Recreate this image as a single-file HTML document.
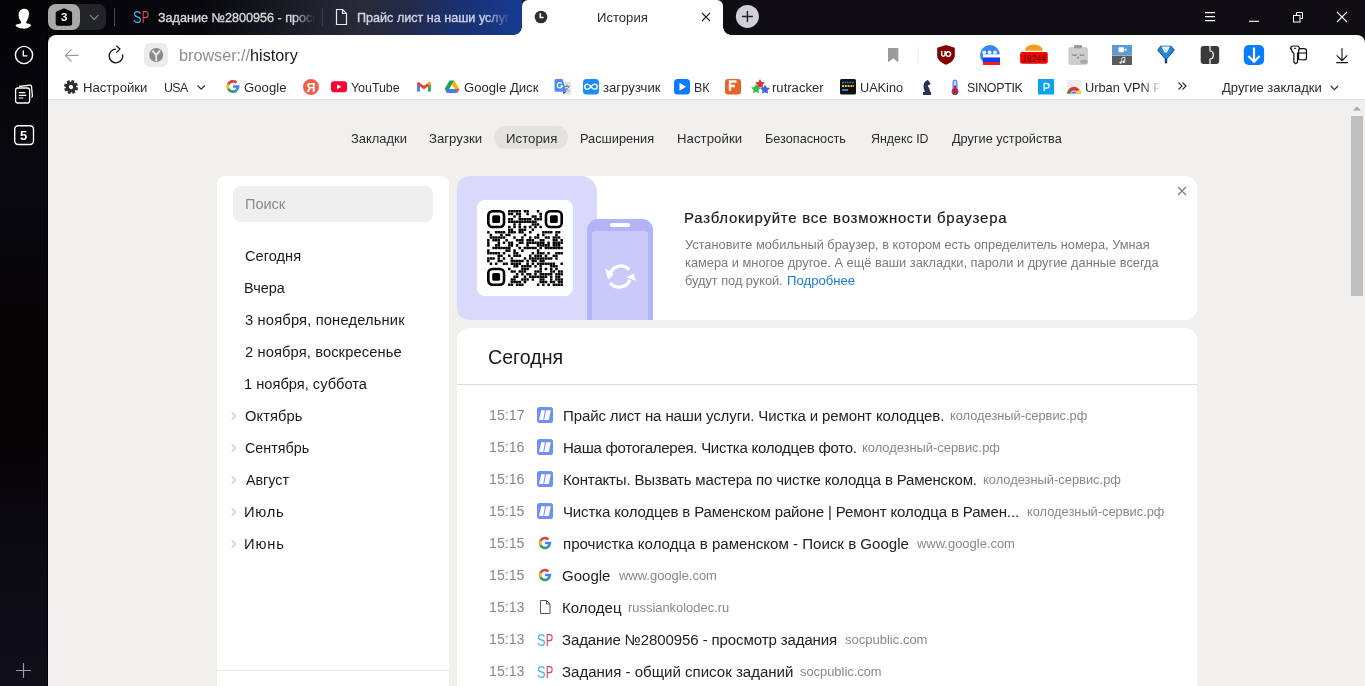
<!DOCTYPE html><html><head><meta charset="utf-8"><style>
*{margin:0;padding:0;box-sizing:border-box}
html,body{width:1365px;height:686px;overflow:hidden;background:#f1f0ef;font-family:"Liberation Sans",sans-serif}
.a{position:absolute}
.t{position:absolute;line-height:1;white-space:nowrap;will-change:transform}
svg{position:absolute;overflow:visible;will-change:transform}
</style></head><body>
<div class="a" style="left:0;top:0;width:48px;height:686px;background:linear-gradient(#050508 0%,#08080e 25%,#070405 50%,#060304 62%,#0b0911 80%,#100e1a 100%)"></div>
<div class="a" style="left:47px;top:35px;width:1px;height:651px;background:#000"></div>
<svg style="left:0;top:0" width="48" height="48">
<path d="M24.5 8.7c2.6 0 4.5 1.6 4.5 4.6 0 3.6-1.6 7.2-2.6 8.2-.6.6-.2 1.6.6 1.9 2.1.5 4.4.9 4.1 1.6-.6 1.9-4 3.7-7 3.7-3.2 0-8-1-8.5-3.6-.1-.6 2.6-1.1 4.9-1.7.8-.2 1-1.2.4-1.8-1.3-1.4-2.3-3.9-2.3-6.6 0-3.9 2.3-6.3 5.9-6.3z" fill="#fff"/>
</svg>
<svg style="left:0;top:40" width="48" height="30">
<circle cx="24" cy="15" r="8.6" fill="none" stroke="#fff" stroke-width="1.4"/>
<path d="M23.3 10.6v5.3h4.2" fill="none" stroke="#fff" stroke-width="1.4"/>
</svg>
<svg style="left:0;top:80" width="48" height="30">
<path d="M19 6.5l11-1.4c.8-.1 1.4.4 1.5 1.2l.9 9.5c.1.8-.4 1.3-1 1.5" fill="none" stroke="#fff" stroke-width="1.3"/>
<rect x="15.6" y="8" width="14" height="15" rx="2.2" fill="#050508" stroke="#fff" stroke-width="1.3"/>
<path d="M18.8 12.6h6.5M18.8 15.3h7.5M18.8 18h4.5" stroke="#fff" stroke-width="1.2"/>
</svg>
<svg style="left:0;top:120" width="48" height="30">
<rect x="14.7" y="5.7" width="18.8" height="18.8" rx="3.5" fill="none" stroke="#fff" stroke-width="1.4"/>
</svg>
<div class="t" style="left:19.5px;top:129.20px;font-size:13px;color:#fff;font-weight:700;">5</div>

<svg style="left:0;top:655" width="48" height="30">
<path d="M23.5 8v15M16 15.5h15" stroke="#9a9aa0" stroke-width="1.2"/>
</svg>
<div class="a" style="left:48px;top:0;width:1317px;height:35px;background:linear-gradient(90deg,#05050a 0px,#07070c 150px,#1c1d28 250px,#272a38 310px,#222a48 360px,#1b3170 410px,#18388a 460px,#183a8e 474px,#0f0c12 474px,#0f0c12 100%)"></div>
<div class="a" style="left:48px;top:4px;width:58px;height:26px;border-radius:8px;background:#232428"></div>
<div class="a" style="left:48px;top:4px;width:32px;height:26px;border-radius:8px;background:#a9a9a9"></div>
<svg style="left:48px;top:0" width="60" height="35">
<path d="M16 8.2 L23.3 11.6 Q24.1 12 24.1 13 L24.1 23.6 Q24.1 25.8 21.9 25.8 L9.9 25.8 Q7.7 25.8 7.7 23.6 L7.7 13 Q7.7 12 8.5 11.6 Z" fill="#000"/>
<path d="M42 15.2l4.2 4.2 4.2-4.2" fill="none" stroke="#8c8c90" stroke-width="1.2"/>
</svg>
<div class="t" style="left:60.9px;top:12.17px;font-size:11.5px;color:#fff;font-weight:700;">3</div>

<div class="a" style="left:114px;top:8px;width:1px;height:18px;background:#48484c"></div>
<svg style="left:133px;top:6.464746227709192px" width="20.3" height="21.8"><text x="0" y="16.74" font-family="Liberation Sans" font-size="16.74" fill="#48b2ee" textLength="8.48" lengthAdjust="spacingAndGlyphs">S</text><text x="8.80" y="16.74" font-family="Liberation Sans" font-size="16.74" fill="#dc4747" textLength="7.50" lengthAdjust="spacingAndGlyphs">P</text></svg>
<div class="t" style="left:157.52px;top:11.83px;font-size:12.600px;color:#d8d8da;width:158px;overflow:hidden;-webkit-text-stroke:0.35px #d8d8da;-webkit-mask-image:linear-gradient(90deg,#000 135px,transparent 157px)">Задание №2800956 - просмотр задания</div>
<div class="a" style="left:322px;top:8px;width:1px;height:18px;background:#3a3d55"></div>
<svg style="left:330px;top:0" width="30" height="35">
<path d="M6.5 9.5h6l4 4v11h-10z" fill="none" stroke="#e8e8ee" stroke-width="1.2"/>
<path d="M12.5 9.5v4h4" fill="none" stroke="#e8e8ee" stroke-width="1.2"/>
</svg>
<div class="t" style="left:357.49px;top:11.83px;font-size:12.600px;color:#d0d4e6;width:155px;overflow:hidden;-webkit-text-stroke:0.35px #d0d4e6;-webkit-mask-image:linear-gradient(90deg,#000 128px,transparent 154px)">Прайс лист на наши услуги</div>
<div class="a" style="left:522px;top:0;width:201px;height:35px;background:#fff;border-radius:6px 6px 0 0"></div>
<div class="a" style="left:514px;top:27px;width:8px;height:8px;background:radial-gradient(circle at 0 0,transparent 7.5px,#fff 8px)"></div>
<div class="a" style="left:723px;top:27px;width:8px;height:8px;background:radial-gradient(circle at 100% 0,transparent 7.5px,#fff 8px)"></div>
<svg style="left:522px;top:0" width="201" height="35">
<circle cx="19" cy="17" r="6.3" fill="#2e2e2e"/>
<path d="M18.3 13.2v4.3h3.3" fill="none" stroke="#fff" stroke-width="1.6"/>
<path d="M180 13l8 8M188 13l-8 8" stroke="#222" stroke-width="1.1"/>
</svg>
<div class="t" style="left:596.65px;top:11.40px;font-size:13.114px;color:#2a2a2a;">История</div>
<svg style="left:730px;top:0" width="40" height="35">
<circle cx="17.4" cy="16.4" r="11.5" fill="#d0d0d4"/>
<path d="M17.4 11v11M11.9 16.5h11" stroke="#1b222a" stroke-width="1.4"/>
</svg>
<svg style="left:1190px;top:0" width="175" height="35">
<path d="M15 12.6h10M15 16.6h10M15 20.6h10" stroke="#fff" stroke-width="1.1"/>
<path d="M59 21.3h10" stroke="#fff" stroke-width="1.1"/>
<rect x="103.5" y="15.5" width="6.5" height="6.5" fill="none" stroke="#fff" stroke-width="1"/>
<path d="M106.5 15V12.5H112.5V18.5H110.5" fill="none" stroke="#fff" stroke-width="1"/>
<path d="M147 12l10 10M157 12l-10 10" stroke="#fff" stroke-width="1.1"/>
</svg>
<div class="a" style="left:48px;top:35px;width:1317px;height:12px;background:#0f0c12"></div>
<div class="a" style="left:48px;top:35px;width:1317px;height:65px;background:#fff;border-radius:8px 8px 0 0"></div>
<div class="a" style="left:48px;top:99px;width:1317px;height:1px;background:#e3e3e3"></div>
<svg style="left:48px;top:35px" width="130" height="38">
<path d="M30.5 20.4H17.4M23.5 14.3l-6.1 6.1 6.1 6.1" fill="none" stroke="#9c9c9c" stroke-width="1.1"/>
<path d="M68 14.2A6.8 6.8 0 1 0 74.6 19.3" fill="none" stroke="#111" stroke-width="1.3"/>
<path d="M68.3 10.6l3.6 3.5-3.6 3.5" fill="none" stroke="#111" stroke-width="1.3"/>
<rect x="96" y="8" width="24" height="24" rx="6" fill="#ececec"/>
<circle cx="108.2" cy="20" r="7" fill="#8b8b8b"/>
<path d="M104.4 15.6l3.8 4.4 3.8-4.4M108.2 20v6" fill="none" stroke="#ececec" stroke-width="1.8"/>
</svg>
<div class="t" style="left:178.5px;top:47.3px;font-size:16.2px;color:#8e8e8e">browser://<span style="color:#1a1a1a">history</span></div>
<svg style="left:860px;top:35px" width="505" height="38">
<path d="M28.6 13.6h9.2v12.6l-4.6-3.6-4.6 3.6z" fill="#9b9b9b" stroke="#9b9b9b" stroke-width="1.2" stroke-linejoin="round"/>
<rect x="57.5" y="12" width="1" height="16" fill="#e6e6e6"/>
<path d="M86 10L94.8 12.7V20C94.8 24.5 91 28 86 29.7C81 28 77.2 24.5 77.2 20V12.7Z" fill="#820000"/>
<path d="M81.7 16.1v3.5a1.65 1.65 0 0 0 3.3 0v-3.5" fill="none" stroke="#fff" stroke-width="1.4"/>
<circle cx="88.3" cy="19.1" r="2.3" fill="none" stroke="#fff" stroke-width="1.4"/>
<circle cx="130" cy="20" r="10" fill="#3a86f0"/>
<circle cx="124.2" cy="17.3" r="1.9" fill="#eaf2ff"/>
<circle cx="129.6" cy="17.3" r="1.9" fill="#eaf2ff"/>
<circle cx="135" cy="17.3" r="1.9" fill="#eaf2ff"/>
<rect x="123" y="19.3" width="17" height="3.3" fill="#fff"/>
<rect x="123" y="22.6" width="17" height="4.4" fill="#1a3ff0"/>
<rect x="123" y="27" width="17" height="3" fill="#ee1c1c"/>
<path d="M164.8 15.8A9.1 6.4 0 0 1 183 15.8Z" fill="#f89a1c"/>
<rect x="160.1" y="17" width="27.7" height="11.8" rx="2" fill="#ff0000"/>
<text x="162.6" y="27" font-family="Liberation Mono" font-size="10" fill="#1a1a1a" textLength="23.6" lengthAdjust="spacingAndGlyphs">10244</text>
<rect x="209" y="12.7" width="18.3" height="16.6" rx="1.5" fill="#cdcdcd" stroke="#bdbdbd" stroke-width="0.8"/>
<rect x="214" y="10" width="8" height="3.2" rx="0.8" fill="#9c9c9c"/>
<path d="M212.3 19.5q2.2 2 4.4 0M219.8 19.5q2.2 2 4.4 0" fill="none" stroke="#8c8c8c" stroke-width="1.1"/>
<circle cx="218" cy="22.7" r="1.1" fill="#8c8c8c"/>
<ellipse cx="224" cy="26.8" rx="3.7" ry="2.2" fill="#a8a8a8"/>
<rect x="252" y="10" width="20" height="10" fill="#5b9bd5"/>
<rect x="252" y="20.5" width="20" height="9.5" fill="#5a5a5a"/>
<rect x="258.5" y="12.2" width="5.5" height="5" rx="1" fill="#fff"/>
<path d="M264 14.7l2.5-1.5v3z" fill="#fff"/>
<circle cx="260.6" cy="27.6" r="1.2" fill="#fff"/><circle cx="263.8" cy="26.7" r="1.2" fill="#fff"/><path d="M261.7 27.6v-4.6l3.2-.9v4.6" fill="none" stroke="#fff" stroke-width="0.8"/>
<path d="M297.7 15L300.7 11.2H311L314.3 15L306 24.8Z" fill="#1e88e0" stroke="#0b3c80" stroke-width="0.9" stroke-linejoin="round"/>
<path d="M301.5 11.6H310L307 17.5H304.3Z" fill="#e6f6ff"/>
<rect x="304.8" y="23.5" width="2.4" height="5" rx="1" fill="#0b3c80"/>
<rect x="340.7" y="11" width="18.5" height="18" rx="3" fill="#3a3a3a"/>
<path d="M350 11v5c2.2 0 3.3 1.8 3.3 4s-1.1 4-3.3 4v5" fill="none" stroke="#fff" stroke-width="1.2"/>
<rect x="383.8" y="10" width="20.3" height="20" rx="5" fill="#0a7cff"/>
<path d="M394 12.5v14M388.3 21l5.7 5.7 5.7-5.7" fill="none" stroke="#fff" stroke-width="2.2"/>
<path d="M430.5 14c0-2 1-3 2.8-3h3.4c1.8 0 2.8 1 2.8 3 0 2-.8 3.5-2 4.5v8.7l-1.8 1.5-1.8-1.5v-8.7c-1.4-1-2.4-2.5-2.4-4.5z" fill="none" stroke="#111" stroke-width="1.2"/>
<path d="M434 13.3h2.2" stroke="#111" stroke-width="1"/>
<path d="M438.6 24.5v-8.5c0-1.5.8-2.3 2.2-2.3h3.5c1.5 0 2.2.8 2.2 2.3v6.8c0 1.2-.8 2-2 2z" fill="#fff" stroke="#111" stroke-width="1.2"/>
<path d="M439 18h7.5" stroke="#111" stroke-width="1.1"/>
<path d="M482 12.9v12.8M476.7 20.4l5.3 5.3 5.3-5.3M476.3 27.6h11.5" fill="none" stroke="#111" stroke-width="1.1"/>
</svg>
<svg style="left:0;top:73px" width="1365" height="26">
<g transform="translate(71,14) rotate(18)" fill="#2e2e2e">
<circle r="3.7" fill="none" stroke="#2e2e2e" stroke-width="3.2"/>
<path d="M-1.5 -7h3v3h-3zM-1.5 4h3v3h-3zM-7 -1.5h3v3h-3zM4 -1.5h3v3h-3z"/>
<path d="M-1.5 -7h3v3h-3zM-1.5 4h3v3h-3zM-7 -1.5h3v3h-3zM4 -1.5h3v3h-3z" transform="rotate(45)"/>
</g>
<path d="M197.5 12.5l3.7 3.7 3.7-3.7" fill="none" stroke="#333" stroke-width="1.2"/>
<g transform="translate(233,13.5)">
<path d="M5.8 -1.2H0v2.5h3.3C2.9 3 1.6 4 0 4A4 4 0 0 1 0 -4c1 0 1.9.4 2.6 1l1.8-1.8A6.5 6.5 0 1 0 6.5 0c0-.4 0-.8-.1-1.2z" fill="#4285f4"/>
<path d="M-5.8 -3A6.5 6.5 0 0 1 4.4 -4.8L2.6 -3A4 4 0 0 0 -3.6 -1.6z" fill="#ea4335"/>
<path d="M-5.8 -3L-3.6 -1.6A4 4 0 0 0 -3.6 1.6L-5.8 3A6.5 6.5 0 0 1 -5.8 -3z" fill="#fbbc05"/>
<path d="M-5.8 3L-3.6 1.6A4 4 0 0 0 2.2 3.4L3.9 5.2A6.5 6.5 0 0 1 -5.8 3z" fill="#34a853"/>
</g>
<circle cx="311" cy="14" r="8" fill="#f0614c"/>
<text x="311" y="18.6" text-anchor="middle" font-family="Liberation Sans" font-size="12.5" font-weight="700" fill="#fff">Я</text>
<rect x="331" y="8.3" width="16" height="11" rx="2.8" fill="#ff0033"/>
<path d="M337 11.3v5l4.3-2.5z" fill="#fff"/>
<path d="M418.5 18.6V11" stroke="#4285f4" stroke-width="2.9"/>
<path d="M429.4 18.6V11" stroke="#34a853" stroke-width="2.9"/>
<path d="M418.5 10.6L423.9 14.6L429.4 10.6" fill="none" stroke="#ea4335" stroke-width="2.9" stroke-linecap="round" stroke-linejoin="round"/>
<circle cx="429.4" cy="10.7" r="1.45" fill="#fbbc04"/>
<path d="M449.6 7.4H454.3L449.2 16.1H444.6Z" fill="#20a050"/>
<path d="M454.3 7.4L459.3 16.1H454.6L451.9 11.5Z" fill="#fbb400"/>
<path d="M444.6 16.1H455.6L457.4 20.1H446.9Z" fill="#3d82f2"/>
<path d="M455.6 16.1H459.3L457.4 20.1Z" fill="#e8432f"/>
<rect x="563" y="9" width="8" height="12.6" fill="#e2e2e2"/>
<path d="M567 11.5v2M565 13.5h4.5M565.5 17l3.5-3M566 15.5l3 3" stroke="#6a7a7a" stroke-width="0.9"/>
<path d="M556.5 6h6l4 12.7h-10.5a1.5 1.5 0 0 1-1.5-1.5v-9.7a1.5 1.5 0 0 1 1.5-1.5z" fill="#4a8af4"/>
<path d="M563 18.7h3.5l-3.2 2.6z" fill="#3a46c8"/>
<path d="M561.8 10.6a2.6 2.6 0 1 0 .6 2.2h-2" fill="none" stroke="#fff" stroke-width="1.2"/>
<rect x="583" y="6" width="16" height="15.5" rx="3.5" fill="#1a8cff"/>
<path d="M591 13.7c-1.4-1.8-2.4-2.6-3.6-2.6a2.6 2.6 0 0 0 0 5.2c1.2 0 2.2-.8 3.6-2.6 1.4-1.8 2.4-2.6 3.6-2.6a2.6 2.6 0 0 1 0 5.2c-1.2 0-2.2-.8-3.6-2.6z" fill="none" stroke="#fff" stroke-width="1.4"/>
<rect x="674" y="6" width="16" height="15.5" rx="3.5" fill="#0a7cff"/>
<path d="M679.5 9.8v8l6.5-4z" fill="#fff"/>
<rect x="725" y="6" width="16" height="15.5" rx="3" fill="#e8622c"/>
<path d="M730 18v-9.5h6.5M730 13h5" fill="none" stroke="#f4f4f4" stroke-width="2.4"/>
<path d="M760 6l1.6 3 3.4.5-2.4 2.4.6 3.4-3.2-1.6-3 1.6.5-3.4-2.4-2.4 3.3-.5z" fill="#e0303c"/>
<path d="M756 11l1.6 3 3.4.5-2.4 2.4.6 3.4-3.2-1.6-3 1.6.5-3.4-2.4-2.4 3.3-.5z" fill="#2bc04a"/>
<path d="M765 11.5l1.6 3 3.4.5-2.4 2.4.6 3.4-3.2-1.6-3 1.6.5-3.4-2.4-2.4 3.3-.5z" fill="#4560e0"/>
<rect x="840" y="6" width="16" height="15.5" rx="1.5" fill="#111"/>
<path d="M842 9.5h12" stroke="#3a8ee0" stroke-width="1.4" stroke-dasharray="1.5 1"/>
<path d="M842 13h12" stroke="#f0c020" stroke-width="2" stroke-dasharray="2 0.8"/>
<path d="M842 17h6" stroke="#3a8ee0" stroke-width="1.8"/>
<path d="M923 21.9H931V18.9L930 18.7C930 16.5 929.2 15 928.3 13.8L927.6 12.4L930.6 11.2L929.6 9C928.9 8 928.1 7.3 927.3 6.8L926.8 7.6C924.6 8.6 923.5 10.6 923.5 13C923.5 15.5 924.4 17 924.9 18.7L923 18.9Z" fill="#2e3050"/>
<rect x="953.1" y="7" width="3.8" height="11" rx="1.9" fill="#bfe0ff" stroke="#1e64e0" stroke-width="1"/>
<circle cx="955" cy="18.6" r="3.1" fill="#e81010" stroke="#1e64e0" stroke-width="1"/>
<rect x="954" y="12.5" width="2" height="6" fill="#e81010"/>
<rect x="1038" y="6" width="16" height="15.5" fill="#0aa3f0"/>
<path d="M1044.2 18.3V10.5h2.4c1.7 0 2.6 .9 2.6 2.3s-.9 2.4-2.6 2.4h-2.4" fill="none" stroke="#fff" stroke-width="1.3"/>
<rect x="1067" y="7" width="14" height="7" fill="#ededed"/>
<path d="M1067.2 20.5A6.8 6.8 0 0 1 1080.8 20.5Z" fill="#db3b2e"/>
<path d="M1067.2 20.5A6.8 6.8 0 0 1 1068.3 16.7L1071.5 20.5Z" fill="#19a049"/>
<path d="M1080.8 20.5A6.8 6.8 0 0 0 1079.5 16.5L1076.3 18.4L1076.6 20.5Z" fill="#fcd116"/>
<path d="M1071.1 20.5A2.9 2.9 0 0 1 1076.9 20.5Z" fill="#fff"/>
<path d="M1071.7 20.5A2.3 2.3 0 0 1 1076.3 20.5Z" fill="#3d7ef0"/>
<path d="M1178.5 9.5l3.5 3.5-3.5 3.5M1182.5 9.5l3.5 3.5-3.5 3.5" fill="none" stroke="#333" stroke-width="1.2"/>
<path d="M1330.8 13l3.6 3.6 3.6-3.6" fill="none" stroke="#333" stroke-width="1.2"/>
</svg>
<div class="t" style="left:82.65px;top:81.37px;font-size:13.145px;color:#2b2b2b;">Настройки</div>
<div class="t" style="left:163.73px;top:81.99px;font-size:12.416px;color:#2b2b2b;letter-spacing:-0.649px;">USA</div>
<div class="t" style="left:244.34px;top:81.34px;font-size:13.184px;color:#2b2b2b;letter-spacing:0.025px;">Google</div>
<div class="t" style="left:351.05px;top:81.99px;font-size:12.416px;color:#2b2b2b;letter-spacing:-0.016px;">YouTube</div>
<div class="t" style="left:463.64px;top:81.39px;font-size:13.125px;color:#2b2b2b;">Google Диск</div>
<div class="t" style="left:603.24px;top:81.34px;font-size:13.184px;color:#2b2b2b;letter-spacing:0.004px;">загрузчик</div>
<div class="t" style="left:693.61px;top:81.99px;font-size:12.416px;color:#2b2b2b;letter-spacing:-0.089px;">ВК</div>
<div class="t" style="left:772.41px;top:81.42px;font-size:13.093px;color:#2b2b2b;">rutracker</div>
<div class="t" style="left:859.61px;top:81.75px;font-size:12.696px;color:#2b2b2b;">UAKino</div>
<div class="t" style="left:966.50px;top:81.99px;font-size:12.416px;color:#2b2b2b;letter-spacing:-0.295px;">SINOPTIK</div>
<div class="t" style="left:1222.10px;top:81.47px;font-size:13.024px;color:#2b2b2b;">Другие закладки</div>
<div class="t" style="left:1085.40px;top:81.66px;font-size:12.800px;color:#2b2b2b;width:76px;overflow:hidden;-webkit-mask-image:linear-gradient(90deg,#000 58px,transparent 76px)">Urban VPN Proxy</div>
<div class="a" style="left:1351px;top:116px;width:12px;height:180px;background:#bfbfbf"></div>
<svg style="left:1345px;top:100px" width="20" height="16"><path d="M8 10.6l4-4 4 4z" fill="#a8a8a8"/></svg>
<div class="a" style="left:494px;top:126px;width:74px;height:23px;border-radius:12px;background:#e3e2e1"></div>
<div class="t" style="left:350.61px;top:132.55px;font-size:12.933px;color:#2b2b2b;">Закладки</div>
<div class="t" style="left:429.10px;top:132.34px;font-size:13.184px;color:#2b2b2b;letter-spacing:0.006px;">Загрузки</div>
<div class="t" style="left:505.65px;top:132.34px;font-size:13.184px;color:#2b2b2b;letter-spacing:0.040px;">История</div>
<div class="t" style="left:579.98px;top:132.70px;font-size:12.760px;color:#2b2b2b;">Расширения</div>
<div class="t" style="left:677.15px;top:132.34px;font-size:13.184px;color:#2b2b2b;letter-spacing:0.064px;">Настройки</div>
<div class="t" style="left:765.18px;top:132.75px;font-size:12.704px;color:#2b2b2b;">Безопасность</div>
<div class="t" style="left:870.50px;top:132.99px;font-size:12.416px;color:#2b2b2b;">Яндекс ID</div>
<div class="t" style="left:952.40px;top:132.73px;font-size:12.727px;color:#2b2b2b;">Другие устройства</div>
<div class="a" style="left:217px;top:176px;width:232px;height:520px;background:#fff;border-radius:8px"></div>
<div class="a" style="left:233px;top:186px;width:200px;height:36px;background:#efefef;border-radius:8px"></div>
<div class="t" style="left:244.54px;top:197.19px;font-size:14.537px;color:#8a8a8a;">Поиск</div>
<div class="t" style="left:244.77px;top:249.10px;font-size:14.647px;color:#1a1a1a;">Сегодня</div>
<div class="t" style="left:244.35px;top:281.30px;font-size:14.415px;color:#1a1a1a;">Вчера</div>
<div class="t" style="left:245.06px;top:313.04px;font-size:14.717px;color:#1a1a1a;letter-spacing:0.157px;">3 ноября, понедельник</div>
<div class="t" style="left:244.76px;top:345.04px;font-size:14.717px;color:#1a1a1a;letter-spacing:0.104px;">2 ноября, воскресенье</div>
<div class="t" style="left:244.47px;top:377.08px;font-size:14.676px;color:#1a1a1a;">1 ноября, суббота</div>
<div class="t" style="left:244.91px;top:409.04px;font-size:14.717px;color:#1a1a1a;letter-spacing:0.091px;">Октябрь</div>
<svg style="left:228px;top:408px" width="12" height="16"><path d="M4 4.5l3.5 3.5-3.5 3.5" fill="none" stroke="#9a9a9a" stroke-width="1"/></svg>
<div class="t" style="left:244.78px;top:441.37px;font-size:14.331px;color:#1a1a1a;">Сентябрь</div>
<svg style="left:228px;top:440px" width="12" height="16"><path d="M4 4.5l3.5 3.5-3.5 3.5" fill="none" stroke="#9a9a9a" stroke-width="1"/></svg>
<div class="t" style="left:245.50px;top:473.40px;font-size:14.292px;color:#1a1a1a;">Август</div>
<svg style="left:228px;top:472px" width="12" height="16"><path d="M4 4.5l3.5 3.5-3.5 3.5" fill="none" stroke="#9a9a9a" stroke-width="1"/></svg>
<div class="t" style="left:244.32px;top:505.04px;font-size:14.717px;color:#1a1a1a;letter-spacing:0.677px;">Июль</div>
<svg style="left:228px;top:504px" width="12" height="16"><path d="M4 4.5l3.5 3.5-3.5 3.5" fill="none" stroke="#9a9a9a" stroke-width="1"/></svg>
<div class="t" style="left:244.32px;top:537.04px;font-size:14.717px;color:#1a1a1a;letter-spacing:0.856px;">Июнь</div>
<svg style="left:228px;top:536px" width="12" height="16"><path d="M4 4.5l3.5 3.5-3.5 3.5" fill="none" stroke="#9a9a9a" stroke-width="1"/></svg>
<div class="a" style="left:217px;top:670px;width:232px;height:1px;background:#e6e6e6"></div>
<div class="a" style="left:457px;top:176px;width:740px;height:144px;background:#fff;border-radius:12px;overflow:hidden"><div class="a" style="left:0;top:0;width:140px;height:144px;background:#d9d9fc;border-radius:0 16px 0 0"></div></div>
<div class="a" style="left:477px;top:200px;width:96px;height:96px;background:#fff;border-radius:8px"></div>
<svg style="left:487px;top:210px" width="76" height="76"><g fill="#000"><rect x="21.02" y="0.05" width="2.52" height="2.52" rx="0.4"/><rect x="23.64" y="0.05" width="2.52" height="2.52" rx="0.4"/><rect x="26.26" y="0.05" width="2.52" height="2.52" rx="0.4"/><rect x="28.88" y="0.05" width="2.52" height="2.52" rx="0.4"/><rect x="31.50" y="0.05" width="2.52" height="2.52" rx="0.4"/><rect x="36.74" y="0.05" width="2.52" height="2.52" rx="0.4"/><rect x="39.36" y="0.05" width="2.52" height="2.52" rx="0.4"/><rect x="49.84" y="0.05" width="2.52" height="2.52" rx="0.4"/><rect x="21.02" y="2.67" width="2.52" height="2.52" rx="0.4"/><rect x="23.64" y="2.67" width="2.52" height="2.52" rx="0.4"/><rect x="28.88" y="2.67" width="2.52" height="2.52" rx="0.4"/><rect x="31.50" y="2.67" width="2.52" height="2.52" rx="0.4"/><rect x="39.36" y="2.67" width="2.52" height="2.52" rx="0.4"/><rect x="52.46" y="2.67" width="2.52" height="2.52" rx="0.4"/><rect x="26.26" y="5.29" width="2.52" height="2.52" rx="0.4"/><rect x="31.50" y="5.29" width="2.52" height="2.52" rx="0.4"/><rect x="44.60" y="5.29" width="2.52" height="2.52" rx="0.4"/><rect x="47.22" y="5.29" width="2.52" height="2.52" rx="0.4"/><rect x="52.46" y="5.29" width="2.52" height="2.52" rx="0.4"/><rect x="21.02" y="7.91" width="2.52" height="2.52" rx="0.4"/><rect x="23.64" y="7.91" width="2.52" height="2.52" rx="0.4"/><rect x="31.50" y="7.91" width="2.52" height="2.52" rx="0.4"/><rect x="34.12" y="7.91" width="2.52" height="2.52" rx="0.4"/><rect x="36.74" y="7.91" width="2.52" height="2.52" rx="0.4"/><rect x="39.36" y="7.91" width="2.52" height="2.52" rx="0.4"/><rect x="41.98" y="7.91" width="2.52" height="2.52" rx="0.4"/><rect x="47.22" y="7.91" width="2.52" height="2.52" rx="0.4"/><rect x="49.84" y="7.91" width="2.52" height="2.52" rx="0.4"/><rect x="52.46" y="7.91" width="2.52" height="2.52" rx="0.4"/><rect x="21.02" y="10.53" width="2.52" height="2.52" rx="0.4"/><rect x="23.64" y="10.53" width="2.52" height="2.52" rx="0.4"/><rect x="26.26" y="10.53" width="2.52" height="2.52" rx="0.4"/><rect x="28.88" y="10.53" width="2.52" height="2.52" rx="0.4"/><rect x="31.50" y="10.53" width="2.52" height="2.52" rx="0.4"/><rect x="34.12" y="10.53" width="2.52" height="2.52" rx="0.4"/><rect x="36.74" y="10.53" width="2.52" height="2.52" rx="0.4"/><rect x="39.36" y="10.53" width="2.52" height="2.52" rx="0.4"/><rect x="41.98" y="10.53" width="2.52" height="2.52" rx="0.4"/><rect x="44.60" y="10.53" width="2.52" height="2.52" rx="0.4"/><rect x="47.22" y="10.53" width="2.52" height="2.52" rx="0.4"/><rect x="26.26" y="13.15" width="2.52" height="2.52" rx="0.4"/><rect x="31.50" y="13.15" width="2.52" height="2.52" rx="0.4"/><rect x="44.60" y="13.15" width="2.52" height="2.52" rx="0.4"/><rect x="47.22" y="13.15" width="2.52" height="2.52" rx="0.4"/><rect x="49.84" y="13.15" width="2.52" height="2.52" rx="0.4"/><rect x="21.02" y="15.77" width="2.52" height="2.52" rx="0.4"/><rect x="26.26" y="15.77" width="2.52" height="2.52" rx="0.4"/><rect x="31.50" y="15.77" width="2.52" height="2.52" rx="0.4"/><rect x="36.74" y="15.77" width="2.52" height="2.52" rx="0.4"/><rect x="41.98" y="15.77" width="2.52" height="2.52" rx="0.4"/><rect x="47.22" y="15.77" width="2.52" height="2.52" rx="0.4"/><rect x="52.46" y="15.77" width="2.52" height="2.52" rx="0.4"/><rect x="21.02" y="18.39" width="2.52" height="2.52" rx="0.4"/><rect x="23.64" y="18.39" width="2.52" height="2.52" rx="0.4"/><rect x="31.50" y="18.39" width="2.52" height="2.52" rx="0.4"/><rect x="34.12" y="18.39" width="2.52" height="2.52" rx="0.4"/><rect x="36.74" y="18.39" width="2.52" height="2.52" rx="0.4"/><rect x="44.60" y="18.39" width="2.52" height="2.52" rx="0.4"/><rect x="0.05" y="21.02" width="2.52" height="2.52" rx="0.4"/><rect x="7.91" y="21.02" width="2.52" height="2.52" rx="0.4"/><rect x="10.53" y="21.02" width="2.52" height="2.52" rx="0.4"/><rect x="13.15" y="21.02" width="2.52" height="2.52" rx="0.4"/><rect x="15.77" y="21.02" width="2.52" height="2.52" rx="0.4"/><rect x="21.02" y="21.02" width="2.52" height="2.52" rx="0.4"/><rect x="23.64" y="21.02" width="2.52" height="2.52" rx="0.4"/><rect x="26.26" y="21.02" width="2.52" height="2.52" rx="0.4"/><rect x="31.50" y="21.02" width="2.52" height="2.52" rx="0.4"/><rect x="34.12" y="21.02" width="2.52" height="2.52" rx="0.4"/><rect x="41.98" y="21.02" width="2.52" height="2.52" rx="0.4"/><rect x="55.08" y="21.02" width="2.52" height="2.52" rx="0.4"/><rect x="57.71" y="21.02" width="2.52" height="2.52" rx="0.4"/><rect x="60.33" y="21.02" width="2.52" height="2.52" rx="0.4"/><rect x="62.95" y="21.02" width="2.52" height="2.52" rx="0.4"/><rect x="68.19" y="21.02" width="2.52" height="2.52" rx="0.4"/><rect x="70.81" y="21.02" width="2.52" height="2.52" rx="0.4"/><rect x="2.67" y="23.64" width="2.52" height="2.52" rx="0.4"/><rect x="13.15" y="23.64" width="2.52" height="2.52" rx="0.4"/><rect x="18.39" y="23.64" width="2.52" height="2.52" rx="0.4"/><rect x="21.02" y="23.64" width="2.52" height="2.52" rx="0.4"/><rect x="36.74" y="23.64" width="2.52" height="2.52" rx="0.4"/><rect x="49.84" y="23.64" width="2.52" height="2.52" rx="0.4"/><rect x="55.08" y="23.64" width="2.52" height="2.52" rx="0.4"/><rect x="68.19" y="23.64" width="2.52" height="2.52" rx="0.4"/><rect x="2.67" y="26.26" width="2.52" height="2.52" rx="0.4"/><rect x="5.29" y="26.26" width="2.52" height="2.52" rx="0.4"/><rect x="7.91" y="26.26" width="2.52" height="2.52" rx="0.4"/><rect x="10.53" y="26.26" width="2.52" height="2.52" rx="0.4"/><rect x="13.15" y="26.26" width="2.52" height="2.52" rx="0.4"/><rect x="15.77" y="26.26" width="2.52" height="2.52" rx="0.4"/><rect x="26.26" y="26.26" width="2.52" height="2.52" rx="0.4"/><rect x="34.12" y="26.26" width="2.52" height="2.52" rx="0.4"/><rect x="41.98" y="26.26" width="2.52" height="2.52" rx="0.4"/><rect x="47.22" y="26.26" width="2.52" height="2.52" rx="0.4"/><rect x="49.84" y="26.26" width="2.52" height="2.52" rx="0.4"/><rect x="57.71" y="26.26" width="2.52" height="2.52" rx="0.4"/><rect x="60.33" y="26.26" width="2.52" height="2.52" rx="0.4"/><rect x="65.57" y="26.26" width="2.52" height="2.52" rx="0.4"/><rect x="68.19" y="26.26" width="2.52" height="2.52" rx="0.4"/><rect x="70.81" y="26.26" width="2.52" height="2.52" rx="0.4"/><rect x="0.05" y="28.88" width="2.52" height="2.52" rx="0.4"/><rect x="5.29" y="28.88" width="2.52" height="2.52" rx="0.4"/><rect x="7.91" y="28.88" width="2.52" height="2.52" rx="0.4"/><rect x="10.53" y="28.88" width="2.52" height="2.52" rx="0.4"/><rect x="18.39" y="28.88" width="2.52" height="2.52" rx="0.4"/><rect x="28.88" y="28.88" width="2.52" height="2.52" rx="0.4"/><rect x="31.50" y="28.88" width="2.52" height="2.52" rx="0.4"/><rect x="34.12" y="28.88" width="2.52" height="2.52" rx="0.4"/><rect x="39.36" y="28.88" width="2.52" height="2.52" rx="0.4"/><rect x="41.98" y="28.88" width="2.52" height="2.52" rx="0.4"/><rect x="44.60" y="28.88" width="2.52" height="2.52" rx="0.4"/><rect x="52.46" y="28.88" width="2.52" height="2.52" rx="0.4"/><rect x="55.08" y="28.88" width="2.52" height="2.52" rx="0.4"/><rect x="65.57" y="28.88" width="2.52" height="2.52" rx="0.4"/><rect x="68.19" y="28.88" width="2.52" height="2.52" rx="0.4"/><rect x="73.43" y="28.88" width="2.52" height="2.52" rx="0.4"/><rect x="0.05" y="31.50" width="2.52" height="2.52" rx="0.4"/><rect x="10.53" y="31.50" width="2.52" height="2.52" rx="0.4"/><rect x="15.77" y="31.50" width="2.52" height="2.52" rx="0.4"/><rect x="21.02" y="31.50" width="2.52" height="2.52" rx="0.4"/><rect x="23.64" y="31.50" width="2.52" height="2.52" rx="0.4"/><rect x="31.50" y="31.50" width="2.52" height="2.52" rx="0.4"/><rect x="34.12" y="31.50" width="2.52" height="2.52" rx="0.4"/><rect x="39.36" y="31.50" width="2.52" height="2.52" rx="0.4"/><rect x="41.98" y="31.50" width="2.52" height="2.52" rx="0.4"/><rect x="44.60" y="31.50" width="2.52" height="2.52" rx="0.4"/><rect x="47.22" y="31.50" width="2.52" height="2.52" rx="0.4"/><rect x="49.84" y="31.50" width="2.52" height="2.52" rx="0.4"/><rect x="52.46" y="31.50" width="2.52" height="2.52" rx="0.4"/><rect x="55.08" y="31.50" width="2.52" height="2.52" rx="0.4"/><rect x="60.33" y="31.50" width="2.52" height="2.52" rx="0.4"/><rect x="65.57" y="31.50" width="2.52" height="2.52" rx="0.4"/><rect x="68.19" y="31.50" width="2.52" height="2.52" rx="0.4"/><rect x="70.81" y="31.50" width="2.52" height="2.52" rx="0.4"/><rect x="73.43" y="31.50" width="2.52" height="2.52" rx="0.4"/><rect x="0.05" y="34.12" width="2.52" height="2.52" rx="0.4"/><rect x="7.91" y="34.12" width="2.52" height="2.52" rx="0.4"/><rect x="10.53" y="34.12" width="2.52" height="2.52" rx="0.4"/><rect x="21.02" y="34.12" width="2.52" height="2.52" rx="0.4"/><rect x="23.64" y="34.12" width="2.52" height="2.52" rx="0.4"/><rect x="28.88" y="34.12" width="2.52" height="2.52" rx="0.4"/><rect x="39.36" y="34.12" width="2.52" height="2.52" rx="0.4"/><rect x="49.84" y="34.12" width="2.52" height="2.52" rx="0.4"/><rect x="52.46" y="34.12" width="2.52" height="2.52" rx="0.4"/><rect x="55.08" y="34.12" width="2.52" height="2.52" rx="0.4"/><rect x="57.71" y="34.12" width="2.52" height="2.52" rx="0.4"/><rect x="60.33" y="34.12" width="2.52" height="2.52" rx="0.4"/><rect x="65.57" y="34.12" width="2.52" height="2.52" rx="0.4"/><rect x="68.19" y="34.12" width="2.52" height="2.52" rx="0.4"/><rect x="70.81" y="34.12" width="2.52" height="2.52" rx="0.4"/><rect x="5.29" y="36.74" width="2.52" height="2.52" rx="0.4"/><rect x="7.91" y="36.74" width="2.52" height="2.52" rx="0.4"/><rect x="10.53" y="36.74" width="2.52" height="2.52" rx="0.4"/><rect x="13.15" y="36.74" width="2.52" height="2.52" rx="0.4"/><rect x="15.77" y="36.74" width="2.52" height="2.52" rx="0.4"/><rect x="18.39" y="36.74" width="2.52" height="2.52" rx="0.4"/><rect x="21.02" y="36.74" width="2.52" height="2.52" rx="0.4"/><rect x="31.50" y="36.74" width="2.52" height="2.52" rx="0.4"/><rect x="36.74" y="36.74" width="2.52" height="2.52" rx="0.4"/><rect x="39.36" y="36.74" width="2.52" height="2.52" rx="0.4"/><rect x="41.98" y="36.74" width="2.52" height="2.52" rx="0.4"/><rect x="44.60" y="36.74" width="2.52" height="2.52" rx="0.4"/><rect x="47.22" y="36.74" width="2.52" height="2.52" rx="0.4"/><rect x="52.46" y="36.74" width="2.52" height="2.52" rx="0.4"/><rect x="57.71" y="36.74" width="2.52" height="2.52" rx="0.4"/><rect x="60.33" y="36.74" width="2.52" height="2.52" rx="0.4"/><rect x="62.95" y="36.74" width="2.52" height="2.52" rx="0.4"/><rect x="65.57" y="36.74" width="2.52" height="2.52" rx="0.4"/><rect x="68.19" y="36.74" width="2.52" height="2.52" rx="0.4"/><rect x="70.81" y="36.74" width="2.52" height="2.52" rx="0.4"/><rect x="73.43" y="36.74" width="2.52" height="2.52" rx="0.4"/><rect x="0.05" y="39.36" width="2.52" height="2.52" rx="0.4"/><rect x="18.39" y="39.36" width="2.52" height="2.52" rx="0.4"/><rect x="21.02" y="39.36" width="2.52" height="2.52" rx="0.4"/><rect x="26.26" y="39.36" width="2.52" height="2.52" rx="0.4"/><rect x="34.12" y="39.36" width="2.52" height="2.52" rx="0.4"/><rect x="49.84" y="39.36" width="2.52" height="2.52" rx="0.4"/><rect x="0.05" y="41.98" width="2.52" height="2.52" rx="0.4"/><rect x="2.67" y="41.98" width="2.52" height="2.52" rx="0.4"/><rect x="5.29" y="41.98" width="2.52" height="2.52" rx="0.4"/><rect x="7.91" y="41.98" width="2.52" height="2.52" rx="0.4"/><rect x="10.53" y="41.98" width="2.52" height="2.52" rx="0.4"/><rect x="15.77" y="41.98" width="2.52" height="2.52" rx="0.4"/><rect x="26.26" y="41.98" width="2.52" height="2.52" rx="0.4"/><rect x="28.88" y="41.98" width="2.52" height="2.52" rx="0.4"/><rect x="44.60" y="41.98" width="2.52" height="2.52" rx="0.4"/><rect x="49.84" y="41.98" width="2.52" height="2.52" rx="0.4"/><rect x="52.46" y="41.98" width="2.52" height="2.52" rx="0.4"/><rect x="55.08" y="41.98" width="2.52" height="2.52" rx="0.4"/><rect x="60.33" y="41.98" width="2.52" height="2.52" rx="0.4"/><rect x="68.19" y="41.98" width="2.52" height="2.52" rx="0.4"/><rect x="70.81" y="41.98" width="2.52" height="2.52" rx="0.4"/><rect x="73.43" y="41.98" width="2.52" height="2.52" rx="0.4"/><rect x="10.53" y="44.60" width="2.52" height="2.52" rx="0.4"/><rect x="13.15" y="44.60" width="2.52" height="2.52" rx="0.4"/><rect x="21.02" y="44.60" width="2.52" height="2.52" rx="0.4"/><rect x="26.26" y="44.60" width="2.52" height="2.52" rx="0.4"/><rect x="28.88" y="44.60" width="2.52" height="2.52" rx="0.4"/><rect x="31.50" y="44.60" width="2.52" height="2.52" rx="0.4"/><rect x="41.98" y="44.60" width="2.52" height="2.52" rx="0.4"/><rect x="47.22" y="44.60" width="2.52" height="2.52" rx="0.4"/><rect x="49.84" y="44.60" width="2.52" height="2.52" rx="0.4"/><rect x="52.46" y="44.60" width="2.52" height="2.52" rx="0.4"/><rect x="57.71" y="44.60" width="2.52" height="2.52" rx="0.4"/><rect x="65.57" y="44.60" width="2.52" height="2.52" rx="0.4"/><rect x="68.19" y="44.60" width="2.52" height="2.52" rx="0.4"/><rect x="0.05" y="47.22" width="2.52" height="2.52" rx="0.4"/><rect x="2.67" y="47.22" width="2.52" height="2.52" rx="0.4"/><rect x="5.29" y="47.22" width="2.52" height="2.52" rx="0.4"/><rect x="10.53" y="47.22" width="2.52" height="2.52" rx="0.4"/><rect x="15.77" y="47.22" width="2.52" height="2.52" rx="0.4"/><rect x="23.64" y="47.22" width="2.52" height="2.52" rx="0.4"/><rect x="36.74" y="47.22" width="2.52" height="2.52" rx="0.4"/><rect x="41.98" y="47.22" width="2.52" height="2.52" rx="0.4"/><rect x="44.60" y="47.22" width="2.52" height="2.52" rx="0.4"/><rect x="47.22" y="47.22" width="2.52" height="2.52" rx="0.4"/><rect x="49.84" y="47.22" width="2.52" height="2.52" rx="0.4"/><rect x="52.46" y="47.22" width="2.52" height="2.52" rx="0.4"/><rect x="55.08" y="47.22" width="2.52" height="2.52" rx="0.4"/><rect x="57.71" y="47.22" width="2.52" height="2.52" rx="0.4"/><rect x="60.33" y="47.22" width="2.52" height="2.52" rx="0.4"/><rect x="62.95" y="47.22" width="2.52" height="2.52" rx="0.4"/><rect x="68.19" y="47.22" width="2.52" height="2.52" rx="0.4"/><rect x="0.05" y="49.84" width="2.52" height="2.52" rx="0.4"/><rect x="10.53" y="49.84" width="2.52" height="2.52" rx="0.4"/><rect x="13.15" y="49.84" width="2.52" height="2.52" rx="0.4"/><rect x="23.64" y="49.84" width="2.52" height="2.52" rx="0.4"/><rect x="26.26" y="49.84" width="2.52" height="2.52" rx="0.4"/><rect x="28.88" y="49.84" width="2.52" height="2.52" rx="0.4"/><rect x="31.50" y="49.84" width="2.52" height="2.52" rx="0.4"/><rect x="34.12" y="49.84" width="2.52" height="2.52" rx="0.4"/><rect x="39.36" y="49.84" width="2.52" height="2.52" rx="0.4"/><rect x="44.60" y="49.84" width="2.52" height="2.52" rx="0.4"/><rect x="47.22" y="49.84" width="2.52" height="2.52" rx="0.4"/><rect x="52.46" y="49.84" width="2.52" height="2.52" rx="0.4"/><rect x="55.08" y="49.84" width="2.52" height="2.52" rx="0.4"/><rect x="2.67" y="52.46" width="2.52" height="2.52" rx="0.4"/><rect x="7.91" y="52.46" width="2.52" height="2.52" rx="0.4"/><rect x="15.77" y="52.46" width="2.52" height="2.52" rx="0.4"/><rect x="18.39" y="52.46" width="2.52" height="2.52" rx="0.4"/><rect x="23.64" y="52.46" width="2.52" height="2.52" rx="0.4"/><rect x="26.26" y="52.46" width="2.52" height="2.52" rx="0.4"/><rect x="28.88" y="52.46" width="2.52" height="2.52" rx="0.4"/><rect x="31.50" y="52.46" width="2.52" height="2.52" rx="0.4"/><rect x="39.36" y="52.46" width="2.52" height="2.52" rx="0.4"/><rect x="44.60" y="52.46" width="2.52" height="2.52" rx="0.4"/><rect x="49.84" y="52.46" width="2.52" height="2.52" rx="0.4"/><rect x="52.46" y="52.46" width="2.52" height="2.52" rx="0.4"/><rect x="55.08" y="52.46" width="2.52" height="2.52" rx="0.4"/><rect x="57.71" y="52.46" width="2.52" height="2.52" rx="0.4"/><rect x="60.33" y="52.46" width="2.52" height="2.52" rx="0.4"/><rect x="62.95" y="52.46" width="2.52" height="2.52" rx="0.4"/><rect x="65.57" y="52.46" width="2.52" height="2.52" rx="0.4"/><rect x="73.43" y="52.46" width="2.52" height="2.52" rx="0.4"/><rect x="26.26" y="55.08" width="2.52" height="2.52" rx="0.4"/><rect x="28.88" y="55.08" width="2.52" height="2.52" rx="0.4"/><rect x="34.12" y="55.08" width="2.52" height="2.52" rx="0.4"/><rect x="36.74" y="55.08" width="2.52" height="2.52" rx="0.4"/><rect x="39.36" y="55.08" width="2.52" height="2.52" rx="0.4"/><rect x="41.98" y="55.08" width="2.52" height="2.52" rx="0.4"/><rect x="47.22" y="55.08" width="2.52" height="2.52" rx="0.4"/><rect x="52.46" y="55.08" width="2.52" height="2.52" rx="0.4"/><rect x="62.95" y="55.08" width="2.52" height="2.52" rx="0.4"/><rect x="65.57" y="55.08" width="2.52" height="2.52" rx="0.4"/><rect x="68.19" y="55.08" width="2.52" height="2.52" rx="0.4"/><rect x="21.02" y="57.71" width="2.52" height="2.52" rx="0.4"/><rect x="34.12" y="57.71" width="2.52" height="2.52" rx="0.4"/><rect x="36.74" y="57.71" width="2.52" height="2.52" rx="0.4"/><rect x="39.36" y="57.71" width="2.52" height="2.52" rx="0.4"/><rect x="52.46" y="57.71" width="2.52" height="2.52" rx="0.4"/><rect x="57.71" y="57.71" width="2.52" height="2.52" rx="0.4"/><rect x="62.95" y="57.71" width="2.52" height="2.52" rx="0.4"/><rect x="68.19" y="57.71" width="2.52" height="2.52" rx="0.4"/><rect x="23.64" y="60.33" width="2.52" height="2.52" rx="0.4"/><rect x="26.26" y="60.33" width="2.52" height="2.52" rx="0.4"/><rect x="31.50" y="60.33" width="2.52" height="2.52" rx="0.4"/><rect x="34.12" y="60.33" width="2.52" height="2.52" rx="0.4"/><rect x="36.74" y="60.33" width="2.52" height="2.52" rx="0.4"/><rect x="47.22" y="60.33" width="2.52" height="2.52" rx="0.4"/><rect x="49.84" y="60.33" width="2.52" height="2.52" rx="0.4"/><rect x="52.46" y="60.33" width="2.52" height="2.52" rx="0.4"/><rect x="62.95" y="60.33" width="2.52" height="2.52" rx="0.4"/><rect x="65.57" y="60.33" width="2.52" height="2.52" rx="0.4"/><rect x="70.81" y="60.33" width="2.52" height="2.52" rx="0.4"/><rect x="73.43" y="60.33" width="2.52" height="2.52" rx="0.4"/><rect x="28.88" y="62.95" width="2.52" height="2.52" rx="0.4"/><rect x="34.12" y="62.95" width="2.52" height="2.52" rx="0.4"/><rect x="39.36" y="62.95" width="2.52" height="2.52" rx="0.4"/><rect x="41.98" y="62.95" width="2.52" height="2.52" rx="0.4"/><rect x="47.22" y="62.95" width="2.52" height="2.52" rx="0.4"/><rect x="52.46" y="62.95" width="2.52" height="2.52" rx="0.4"/><rect x="55.08" y="62.95" width="2.52" height="2.52" rx="0.4"/><rect x="57.71" y="62.95" width="2.52" height="2.52" rx="0.4"/><rect x="60.33" y="62.95" width="2.52" height="2.52" rx="0.4"/><rect x="62.95" y="62.95" width="2.52" height="2.52" rx="0.4"/><rect x="68.19" y="62.95" width="2.52" height="2.52" rx="0.4"/><rect x="70.81" y="62.95" width="2.52" height="2.52" rx="0.4"/><rect x="73.43" y="62.95" width="2.52" height="2.52" rx="0.4"/><rect x="26.26" y="65.57" width="2.52" height="2.52" rx="0.4"/><rect x="28.88" y="65.57" width="2.52" height="2.52" rx="0.4"/><rect x="36.74" y="65.57" width="2.52" height="2.52" rx="0.4"/><rect x="41.98" y="65.57" width="2.52" height="2.52" rx="0.4"/><rect x="44.60" y="65.57" width="2.52" height="2.52" rx="0.4"/><rect x="47.22" y="65.57" width="2.52" height="2.52" rx="0.4"/><rect x="49.84" y="65.57" width="2.52" height="2.52" rx="0.4"/><rect x="52.46" y="65.57" width="2.52" height="2.52" rx="0.4"/><rect x="55.08" y="65.57" width="2.52" height="2.52" rx="0.4"/><rect x="57.71" y="65.57" width="2.52" height="2.52" rx="0.4"/><rect x="62.95" y="65.57" width="2.52" height="2.52" rx="0.4"/><rect x="68.19" y="65.57" width="2.52" height="2.52" rx="0.4"/><rect x="70.81" y="65.57" width="2.52" height="2.52" rx="0.4"/><rect x="23.64" y="68.19" width="2.52" height="2.52" rx="0.4"/><rect x="26.26" y="68.19" width="2.52" height="2.52" rx="0.4"/><rect x="34.12" y="68.19" width="2.52" height="2.52" rx="0.4"/><rect x="36.74" y="68.19" width="2.52" height="2.52" rx="0.4"/><rect x="39.36" y="68.19" width="2.52" height="2.52" rx="0.4"/><rect x="44.60" y="68.19" width="2.52" height="2.52" rx="0.4"/><rect x="52.46" y="68.19" width="2.52" height="2.52" rx="0.4"/><rect x="55.08" y="68.19" width="2.52" height="2.52" rx="0.4"/><rect x="62.95" y="68.19" width="2.52" height="2.52" rx="0.4"/><rect x="68.19" y="68.19" width="2.52" height="2.52" rx="0.4"/><rect x="70.81" y="68.19" width="2.52" height="2.52" rx="0.4"/><rect x="73.43" y="68.19" width="2.52" height="2.52" rx="0.4"/><rect x="23.64" y="70.81" width="2.52" height="2.52" rx="0.4"/><rect x="26.26" y="70.81" width="2.52" height="2.52" rx="0.4"/><rect x="28.88" y="70.81" width="2.52" height="2.52" rx="0.4"/><rect x="31.50" y="70.81" width="2.52" height="2.52" rx="0.4"/><rect x="36.74" y="70.81" width="2.52" height="2.52" rx="0.4"/><rect x="52.46" y="70.81" width="2.52" height="2.52" rx="0.4"/><rect x="55.08" y="70.81" width="2.52" height="2.52" rx="0.4"/><rect x="57.71" y="70.81" width="2.52" height="2.52" rx="0.4"/><rect x="62.95" y="70.81" width="2.52" height="2.52" rx="0.4"/><rect x="65.57" y="70.81" width="2.52" height="2.52" rx="0.4"/><rect x="70.81" y="70.81" width="2.52" height="2.52" rx="0.4"/><rect x="73.43" y="70.81" width="2.52" height="2.52" rx="0.4"/><rect x="21.02" y="73.43" width="2.52" height="2.52" rx="0.4"/><rect x="23.64" y="73.43" width="2.52" height="2.52" rx="0.4"/><rect x="28.88" y="73.43" width="2.52" height="2.52" rx="0.4"/><rect x="31.50" y="73.43" width="2.52" height="2.52" rx="0.4"/><rect x="34.12" y="73.43" width="2.52" height="2.52" rx="0.4"/><rect x="49.84" y="73.43" width="2.52" height="2.52" rx="0.4"/><rect x="55.08" y="73.43" width="2.52" height="2.52" rx="0.4"/><rect x="60.33" y="73.43" width="2.52" height="2.52" rx="0.4"/><rect x="65.57" y="73.43" width="2.52" height="2.52" rx="0.4"/><rect x="68.19" y="73.43" width="2.52" height="2.52" rx="0.4"/><rect x="70.81" y="73.43" width="2.52" height="2.52" rx="0.4"/><rect x="73.43" y="73.43" width="2.52" height="2.52" rx="0.4"/></g><rect x="1.31" y="1.31" width="15.72" height="15.72" rx="4.19" fill="none" stroke="#000" stroke-width="2.62"/><rect x="5.24" y="5.24" width="7.86" height="7.86" rx="1.57" fill="#000"/><rect x="58.97" y="1.31" width="15.72" height="15.72" rx="4.19" fill="none" stroke="#000" stroke-width="2.62"/><rect x="62.90" y="5.24" width="7.86" height="7.86" rx="1.57" fill="#000"/><rect x="1.31" y="58.97" width="15.72" height="15.72" rx="4.19" fill="none" stroke="#000" stroke-width="2.62"/><rect x="5.24" y="62.90" width="7.86" height="7.86" rx="1.57" fill="#000"/></svg>
<div class="a" style="left:587px;top:219px;width:66px;height:101px;background:#b3b4f8;border-radius:11px 11px 0 0"></div>
<div class="a" style="left:592px;top:231px;width:56px;height:89px;background:#c9caf9;border-radius:3px 3px 0 0"></div>
<div class="a" style="left:610px;top:223px;width:20px;height:4px;background:#fff;border-radius:2px"></div>
<svg style="left:600px;top:256px" width="40" height="40">
<path d="M29.3 13.6A11.5 11.5 0 0 0 10.5 16.5" fill="none" stroke="#fff" stroke-width="3.4"/>
<path d="M10.3 27A11.5 11.5 0 0 0 29.8 23.8" fill="none" stroke="#fff" stroke-width="3.4"/>
<path d="M5 12.3L13.8 18.5 8.2 23.7z" fill="#fff"/>
<path d="M26.2 21.4L33.6 17.6 35.8 24.8z" fill="#fff"/>
</svg>
<div class="t" style="left:684.40px;top:210.85px;font-size:14.948px;color:#1a1a1a;letter-spacing:0.782px;-webkit-text-stroke:0.2px #1a1a1a">Разблокируйте все возможности браузера</div>
<div class="t" style="left:685.34px;top:238.67px;font-size:12.791px;color:#7a7a7a;">Установите мобильный браузер, в котором есть определитель номера, Умная</div>
<div class="t" style="left:684.83px;top:256.63px;font-size:12.845px;color:#7a7a7a;">камера и многое другое. А ещё ваши закладки, пароли и другие данные всегда</div>
<div class="t" style="left:684.96px;top:274.51px;font-size:12.750px;color:#7a7a7a;">будут под рукой.</div>
<div class="t" style="left:787.35px;top:274.16px;font-size:13.156px;color:#1a7ad6;">Подробнее</div>
<svg style="left:1170px;top:179px" width="24" height="24"><path d="M8 8l8 8M16 8l-8 8" stroke="#777" stroke-width="1.1"/></svg>
<div class="a" style="left:457px;top:328px;width:740px;height:400px;background:#fff;border-radius:12px"></div>
<div class="t" style="left:488.42px;top:347.89px;font-size:19.618px;color:#1a1a1a;">Сегодня</div>
<div class="a" style="left:457px;top:384px;width:740px;height:1px;background:#dcdcdc"></div>
<div class="t" style="left:488.60px;top:408.44px;font-size:14.248px;color:#888888;">15:17</div>
<svg style="left:537px;top:407px" width="16" height="16"><rect x="0" y="0" width="16" height="16" rx="2.5" fill="#6d92f6"/><path d="M4.3 3.2H7.9L6.3 13H2.1ZM9.1 3.2H13.8L11.7 13H7.2Z" fill="#fff"/></svg>
<div class="t" style="left:562.80px;top:408.38px;font-size:15.024px;color:#222222;letter-spacing:-0.122px;">Прайс лист на наши услуги. Чистка и ремонт колодцев.</div>
<div class="t" style="left:950.23px;top:409.64px;font-size:12.829px;color:#888888;">колодезный-сервис.рф</div>
<div class="t" style="left:488.61px;top:440.49px;font-size:14.189px;color:#888888;">15:16</div>
<svg style="left:537px;top:439px" width="16" height="16"><rect x="0" y="0" width="16" height="16" rx="2.5" fill="#6d92f6"/><path d="M4.3 3.2H7.9L6.3 13H2.1ZM9.1 3.2H13.8L11.7 13H7.2Z" fill="#fff"/></svg>
<div class="t" style="left:562.80px;top:440.38px;font-size:15.024px;color:#222222;letter-spacing:-0.270px;">Наша фотогалерея. Чистка колодцев фото.</div>
<div class="t" style="left:862.43px;top:441.59px;font-size:12.885px;color:#888888;">колодезный-сервис.рф</div>
<div class="t" style="left:488.61px;top:472.49px;font-size:14.189px;color:#888888;">15:16</div>
<svg style="left:537px;top:471px" width="16" height="16"><rect x="0" y="0" width="16" height="16" rx="2.5" fill="#6d92f6"/><path d="M4.3 3.2H7.9L6.3 13H2.1ZM9.1 3.2H13.8L11.7 13H7.2Z" fill="#fff"/></svg>
<div class="t" style="left:562.80px;top:472.38px;font-size:15.024px;color:#222222;letter-spacing:-0.180px;">Контакты. Вызвать мастера по чистке колодца в Раменском.</div>
<div class="t" style="left:982.93px;top:473.59px;font-size:12.885px;color:#888888;">колодезный-сервис.рф</div>
<div class="t" style="left:488.61px;top:504.49px;font-size:14.189px;color:#888888;">15:15</div>
<svg style="left:537px;top:503px" width="16" height="16"><rect x="0" y="0" width="16" height="16" rx="2.5" fill="#6d92f6"/><path d="M4.3 3.2H7.9L6.3 13H2.1ZM9.1 3.2H13.8L11.7 13H7.2Z" fill="#fff"/></svg>
<div class="t" style="left:562.95px;top:504.38px;font-size:15.024px;color:#222222;letter-spacing:-0.143px;">Чистка колодцев в Раменском районе | Ремонт колодца в Рамен...</div>
<div class="t" style="left:1026.83px;top:505.63px;font-size:12.838px;color:#888888;">колодезный-сервис.рф</div>
<div class="t" style="left:488.61px;top:536.49px;font-size:14.189px;color:#888888;">15:15</div>
<svg style="left:537px;top:535px" width="16" height="16"><g transform="translate(8,8) scale(0.95)">
<path d="M5.8 -1.2H0v2.5h3.3C2.9 3 1.6 4 0 4A4 4 0 0 1 0 -4c1 0 1.9.4 2.6 1l1.8-1.8A6.5 6.5 0 1 0 6.5 0c0-.4 0-.8-.1-1.2z" fill="#4285f4"/>
<path d="M-5.8 -3A6.5 6.5 0 0 1 4.4 -4.8L2.6 -3A4 4 0 0 0 -3.6 -1.6z" fill="#ea4335"/>
<path d="M-5.8 -3L-3.6 -1.6A4 4 0 0 0 -3.6 1.6L-5.8 3A6.5 6.5 0 0 1 -5.8 -3z" fill="#fbbc05"/>
<path d="M-5.8 3L-3.6 1.6A4 4 0 0 0 2.2 3.4L3.9 5.2A6.5 6.5 0 0 1 -5.8 3z" fill="#34a853"/>
</g></svg>
<div class="t" style="left:563.09px;top:536.32px;font-size:15.094px;color:#222222;">прочистка колодца в раменском - Поиск в Google</div>
<div class="t" style="left:917.23px;top:537.53px;font-size:12.963px;color:#888888;">www.google.com</div>
<div class="t" style="left:488.61px;top:568.49px;font-size:14.189px;color:#888888;">15:15</div>
<svg style="left:537px;top:567px" width="16" height="16"><g transform="translate(8,8) scale(0.95)">
<path d="M5.8 -1.2H0v2.5h3.3C2.9 3 1.6 4 0 4A4 4 0 0 1 0 -4c1 0 1.9.4 2.6 1l1.8-1.8A6.5 6.5 0 1 0 6.5 0c0-.4 0-.8-.1-1.2z" fill="#4285f4"/>
<path d="M-5.8 -3A6.5 6.5 0 0 1 4.4 -4.8L2.6 -3A4 4 0 0 0 -3.6 -1.6z" fill="#ea4335"/>
<path d="M-5.8 -3L-3.6 -1.6A4 4 0 0 0 -3.6 1.6L-5.8 3A6.5 6.5 0 0 1 -5.8 -3z" fill="#fbbc05"/>
<path d="M-5.8 3L-3.6 1.6A4 4 0 0 0 2.2 3.4L3.9 5.2A6.5 6.5 0 0 1 -5.8 3z" fill="#34a853"/>
</g></svg>
<div class="t" style="left:562.45px;top:568.37px;font-size:15.039px;color:#222222;">Google</div>
<div class="t" style="left:618.73px;top:569.53px;font-size:12.963px;color:#888888;">www.google.com</div>
<div class="t" style="left:488.61px;top:600.49px;font-size:14.189px;color:#888888;">15:13</div>
<svg style="left:537px;top:599px" width="16" height="16"><path d="M3.5 1.5h6l3.5 3.5v9.5h-9.5z" fill="none" stroke="#555" stroke-width="1"/><path d="M9.5 1.5v3.5h3.5" fill="none" stroke="#555" stroke-width="1"/></svg>
<div class="t" style="left:562.30px;top:600.36px;font-size:15.044px;color:#222222;">Колодец</div>
<div class="t" style="left:628.13px;top:601.57px;font-size:12.916px;color:#888888;">russiankolodec.ru</div>
<div class="t" style="left:488.61px;top:632.49px;font-size:14.189px;color:#888888;">15:13</div>
<svg style="left:536.6px;top:629.6134430727022px" width="20.4" height="21.0"><text x="0" y="16.19" font-family="Liberation Sans" font-size="16.19" fill="#48b2ee" textLength="8.53" lengthAdjust="spacingAndGlyphs">S</text><text x="8.86" y="16.19" font-family="Liberation Sans" font-size="16.19" fill="#dc4747" textLength="7.54" lengthAdjust="spacingAndGlyphs">P</text></svg>
<div class="t" style="left:562.45px;top:632.38px;font-size:15.024px;color:#222222;letter-spacing:-0.108px;">Задание №2800956 - просмотр задания</div>
<div class="t" style="left:844.54px;top:633.47px;font-size:13.034px;color:#888888;">socpublic.com</div>
<div class="t" style="left:488.61px;top:664.49px;font-size:14.189px;color:#888888;">15:13</div>
<svg style="left:536.6px;top:661.6134430727022px" width="20.4" height="21.0"><text x="0" y="16.19" font-family="Liberation Sans" font-size="16.19" fill="#48b2ee" textLength="8.53" lengthAdjust="spacingAndGlyphs">S</text><text x="8.86" y="16.19" font-family="Liberation Sans" font-size="16.19" fill="#dc4747" textLength="7.54" lengthAdjust="spacingAndGlyphs">P</text></svg>
<div class="t" style="left:562.45px;top:664.37px;font-size:15.044px;color:#222222;">Задания - общий список заданий</div>
<div class="t" style="left:800.04px;top:665.59px;font-size:12.890px;color:#888888;">socpublic.com</div>
</body></html>
